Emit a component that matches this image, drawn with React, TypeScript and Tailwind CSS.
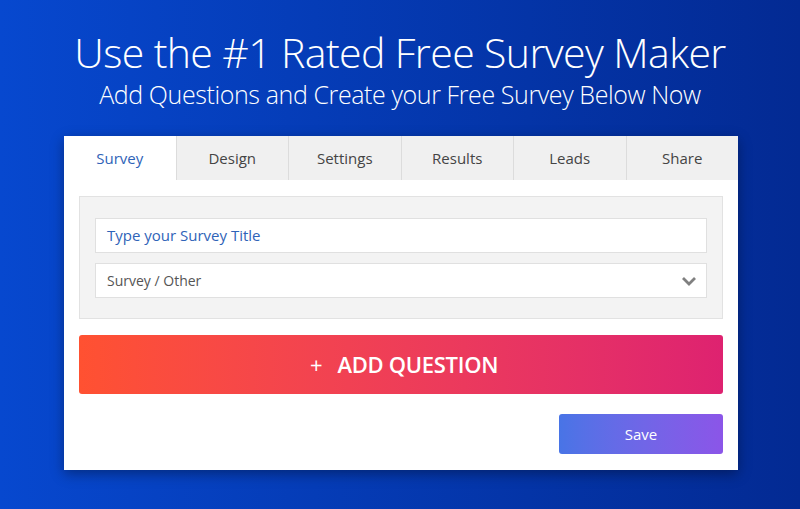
import React from 'react';

const tabs = ['Survey', 'Design', 'Settings', 'Results', 'Leads', 'Share'];

const Tabs: React.FC = () => (
  <div className="flex h-[44px]">
    {tabs.map((t, i) => (
      <div
        key={t}
        className={`flex-1 flex items-center justify-center text-[15px] ${
          i === 0 ? 'bg-white text-[#2f63b8]' : 'bg-[#f0f0f0] text-[#444] border-l border-[#dcdcdc]'
        }`}
      >
        {t}
      </div>
    ))}
  </div>
);

const App: React.FC = () => {
  return (
    <div
      className="w-[800px] h-[509px] overflow-hidden bg-gradient-to-r from-[#0748cf] to-[#032a93] flex flex-col items-center"
      style={{ fontFamily: '"Open Sans", "Noto Sans", sans-serif' }}
    >
      <h1 className="mt-[26px] text-white text-[41px] font-light leading-[52px] tracking-[-0.6px]">
        Use the #1 Rated Free Survey Maker
      </h1>
      <p className="mt-[1px] text-white text-[25px] font-light leading-[30px] tracking-[-0.4px]">
        Add Questions and Create your Free Survey Below Now
      </p>

      <div className="mt-[27px] ml-[2px] w-[674px] bg-white shadow-[0_4px_12px_rgba(0,0,0,0.35)]">
        <Tabs />
        <div className="px-[15px] pt-[16px] pb-[16px]">
          <div className="bg-[#f3f3f3] border border-[#e2e2e2] px-[15px] pt-[21px] pb-[20px] flex flex-col gap-[10px]">
            <div className="h-[35px] bg-white border border-[#e0e0e0] flex items-center px-[11px] text-[15px] text-[#2f63b8]">
              Type your Survey Title
            </div>
            <div className="h-[35px] bg-white border border-[#e0e0e0] flex items-center justify-between px-[11px] text-[14px] text-[#555]">
              <span>Survey / Other</span>
              <svg width="16" height="12" viewBox="0 0 16 12" className="mr-[-2px]">
                <path d="M2 3 L8 9 L14 3" fill="none" stroke="#808080" strokeWidth="2.8" />
              </svg>
            </div>
          </div>

          <button className="mt-[16px] w-full h-[59px] rounded-[3px] bg-gradient-to-r from-[#ff5131] to-[#de2270] text-white flex items-center justify-center gap-[15px] pl-[6px]">
            <span className="text-[22px] font-normal">+</span>
            <span className="text-[22px] font-semibold tracking-[-0.3px]">ADD QUESTION</span>
          </button>

          <div className="mt-[20px] flex justify-end">
            <button className="w-[164px] h-[40px] rounded-[3px] bg-gradient-to-r from-[#4874e6] to-[#8b55e8] text-white text-[15px]">
              Save
            </button>
          </div>
        </div>
      </div>
    </div>
  );
};

export default App;
